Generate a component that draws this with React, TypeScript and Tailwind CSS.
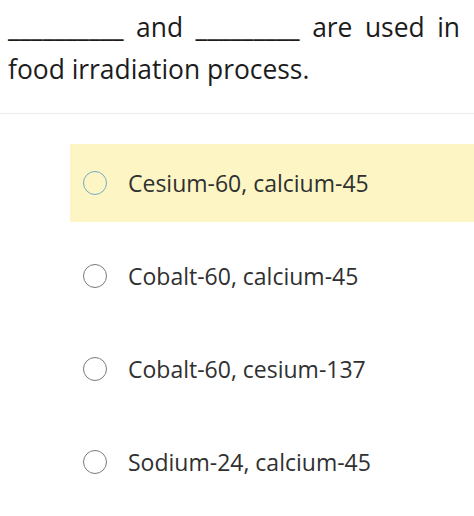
const options = [
  { label: "Cesium-60, calcium-45", active: true },
  { label: "Cobalt-60, calcium-45", active: false },
  { label: "Cobalt-60, cesium-137", active: false },
  { label: "Sodium-24, calcium-45", active: false },
];

const App = () => {
  return (
    <div className="w-[474px] h-[516px] bg-white font-['Open_Sans',sans-serif] overflow-hidden">
      <div className="pl-2 pr-3.5 pt-1.5 pb-[23px] border-b border-[#ececec]">
        <p className="text-[26.4px] leading-[42px] text-[#1c1c1c] text-justify">
          __________ and _________ are used in food irradiation process.
        </p>
      </div>
      <div className="ml-[70px] mt-[30px] flex flex-col gap-[15px]">
        {options.map((opt) => (
          <div
            key={opt.label}
            className={`h-[78px] flex items-center pl-[13px] ${opt.active ? "bg-[#fdf6c4]" : ""}`}
          >
            <span
              className={`w-6 h-6 rounded-full border-[1.5px] shrink-0 ${
                opt.active ? "border-[#72acc6]" : "border-[#7a7a7a]"
              }`}
            />
            <span className="ml-[21px] text-[23px] text-[#303030]">{opt.label}</span>
          </div>
        ))}
      </div>
    </div>
  );
};

export default App;
